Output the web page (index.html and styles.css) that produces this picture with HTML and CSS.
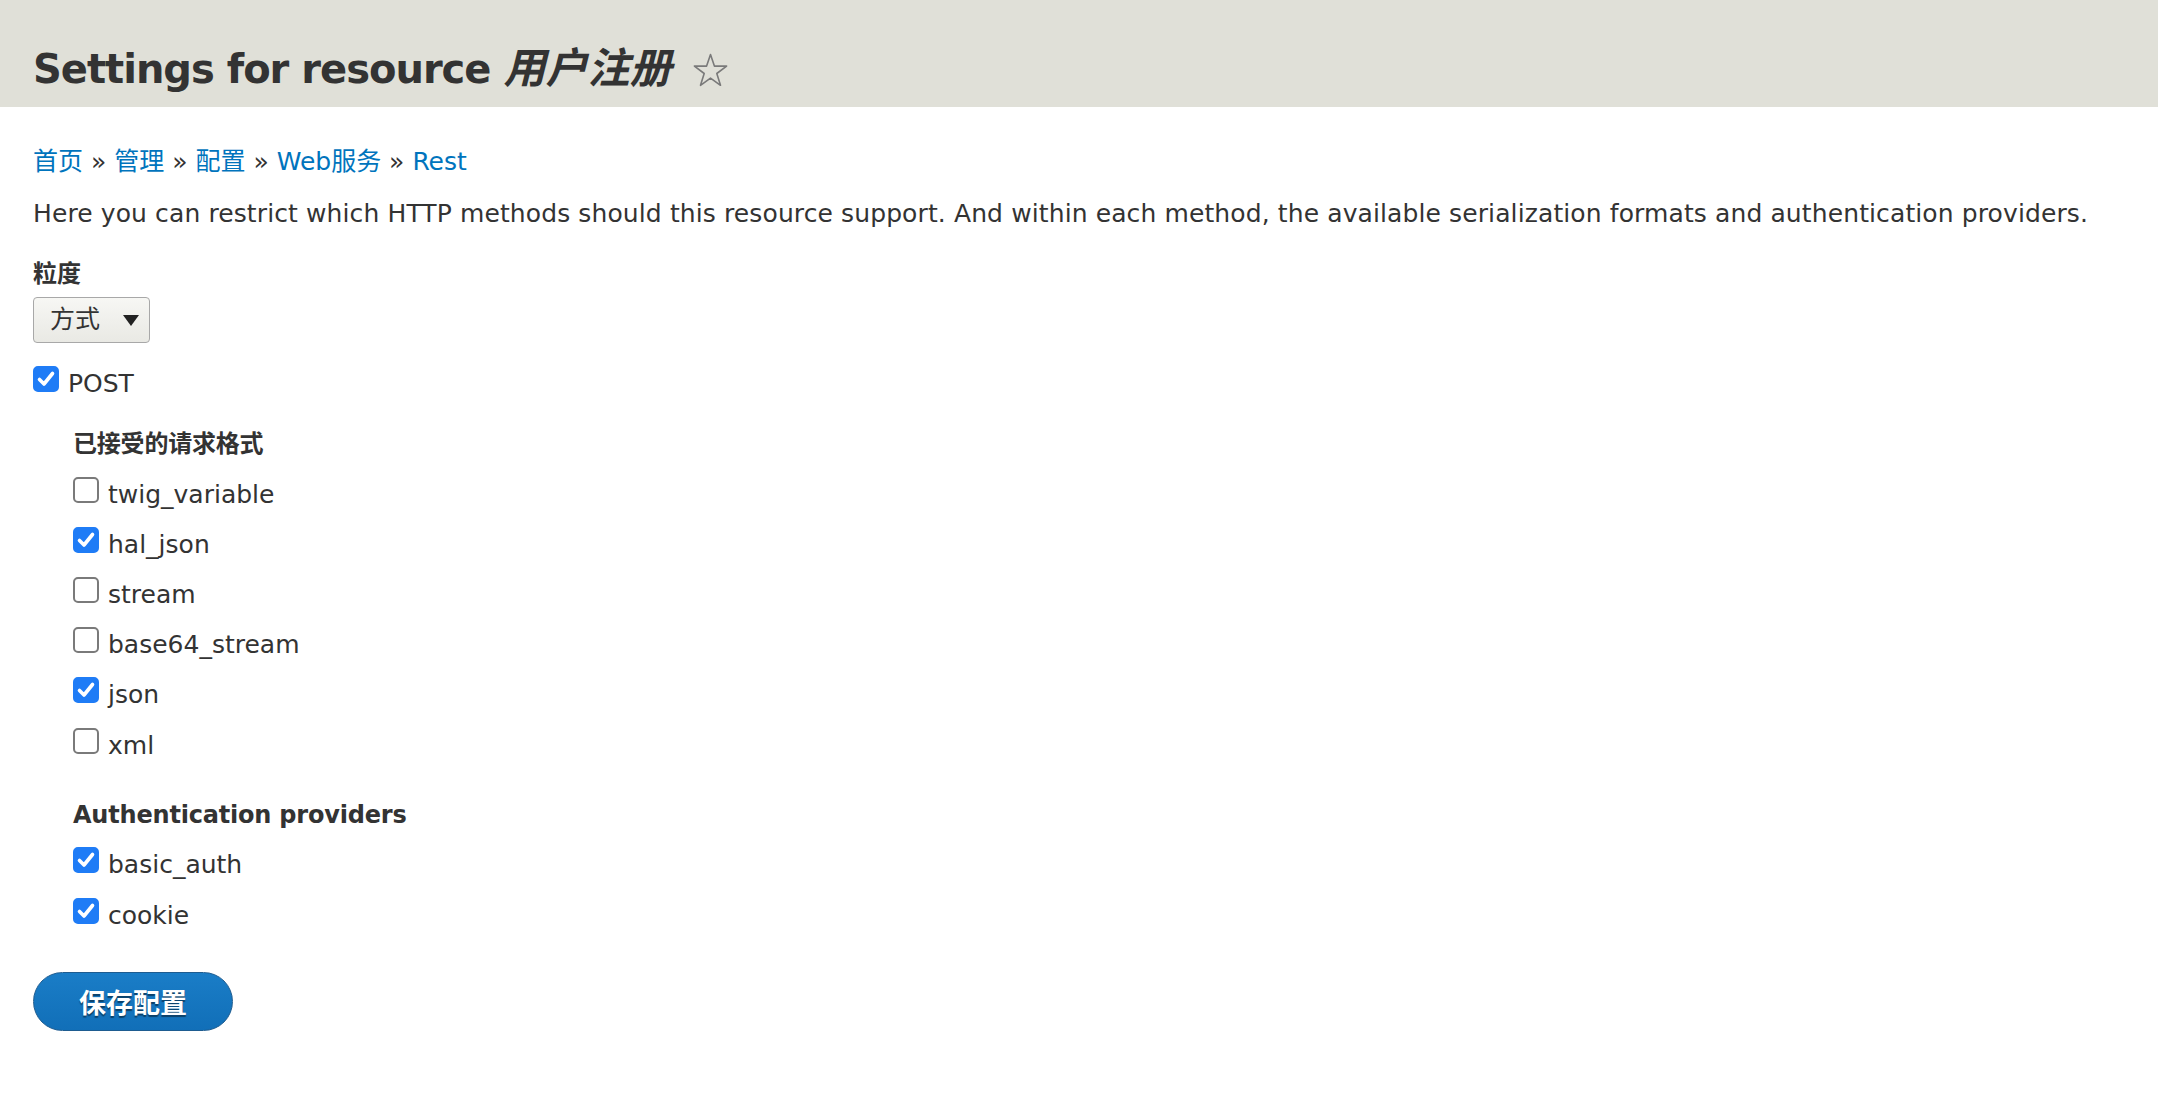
FILE: index.html
```html
<!DOCTYPE html>
<html lang="zh">
<head>
<meta charset="utf-8">
<title>Settings for resource 用户注册</title>
<link rel="stylesheet" href="styles.css">
</head>
<body>
<header class="page-header">
  <h1 class="page-title">Settings for resource <em class="title-name">用户注册</em><svg class="star" width="36" height="36" viewBox="0 0 36 36" aria-hidden="true"><polygon points="17.5,1.5 21.4,13.1 33.6,13.1 23.8,20.5 27.5,32.3 17.5,25.1 7.5,32.3 11.2,20.5 1.4,13.1 13.6,13.1" fill="none" stroke="#7a7a7a" stroke-width="1.6" stroke-linejoin="round"/></svg></h1>
</header>
<main class="content">
  <nav class="breadcrumb"><a href="#">首页</a> » <a href="#">管理</a> » <a href="#">配置</a> » <a href="#">Web服务</a> » <a href="#">Rest</a></nav>
  <p class="description">Here you can restrict which HTTP methods should this resource support. And within each method, the available serialization formats and authentication providers.</p>
  <div class="form-item">
    <label class="label">粒度</label>
    <div class="select"><span class="select-text">方式</span><svg class="select-arrow" width="16" height="11" viewBox="0 0 16 11" aria-hidden="true"><polygon points="0,0 16,0 8,11" fill="#222"/></svg></div>
  </div>
  <div class="check-row post"><span class="cb checked"><svg width="26" height="26" viewBox="0 0 26 26"><path d="M6.5 13.5 L11 18 L19.5 7.5" fill="none" stroke="#fff" stroke-width="3.6" stroke-linecap="round" stroke-linejoin="round"/></svg></span><span class="cb-label">POST</span></div>
  <div class="sub">
    <h3 class="sub-title">已接受的请求格式</h3>
    <div class="check-row first"><span class="cb"></span><span class="cb-label">twig_variable</span></div>
    <div class="check-row"><span class="cb checked"><svg width="26" height="26" viewBox="0 0 26 26"><path d="M6.5 13.5 L11 18 L19.5 7.5" fill="none" stroke="#fff" stroke-width="3.6" stroke-linecap="round" stroke-linejoin="round"/></svg></span><span class="cb-label">hal_json</span></div>
    <div class="check-row"><span class="cb"></span><span class="cb-label">stream</span></div>
    <div class="check-row"><span class="cb"></span><span class="cb-label">base64_stream</span></div>
    <div class="check-row"><span class="cb checked"><svg width="26" height="26" viewBox="0 0 26 26"><path d="M6.5 13.5 L11 18 L19.5 7.5" fill="none" stroke="#fff" stroke-width="3.6" stroke-linecap="round" stroke-linejoin="round"/></svg></span><span class="cb-label">json</span></div>
    <div class="check-row"><span class="cb"></span><span class="cb-label">xml</span></div>
    <h3 class="sub-title auth">Authentication providers</h3>
    <div class="check-row first-auth"><span class="cb checked"><svg width="26" height="26" viewBox="0 0 26 26"><path d="M6.5 13.5 L11 18 L19.5 7.5" fill="none" stroke="#fff" stroke-width="3.6" stroke-linecap="round" stroke-linejoin="round"/></svg></span><span class="cb-label">basic_auth</span></div>
    <div class="check-row"><span class="cb checked"><svg width="26" height="26" viewBox="0 0 26 26"><path d="M6.5 13.5 L11 18 L19.5 7.5" fill="none" stroke="#fff" stroke-width="3.6" stroke-linecap="round" stroke-linejoin="round"/></svg></span><span class="cb-label">cookie</span></div>
  </div>
  <button class="btn-primary" type="button">保存配置</button>
</main>
</body>
</html>
```
FILE: styles.css
```css
html, body {
  margin: 0;
  padding: 0;
  background: #fff;
}
body {
  font-family: "DejaVu Sans", "Noto Sans CJK SC", sans-serif;
  font-size: 25px;
  color: #333;
}
.page-header {
  background: #e0e0d8;
  height: 107px;
  box-sizing: border-box;
  padding: 45px 33px 0;
}
.page-title {
  margin: 0;
  font-size: 40px;
  line-height: 48px;
  font-weight: bold;
  letter-spacing: -1px;
  color: #333;
  white-space: nowrap;
  display: flex;
  align-items: baseline;
}
.title-name {
  font-style: italic;
  font-size: 42px;
  letter-spacing: 0;
  margin-left: 13px;
}
.star {
  margin-left: 22px;
  align-self: center;
  position: relative;
  top: 2px;
}
.content {
  padding: 0 33px;
}
.breadcrumb {
  margin-top: 40px;
  line-height: 30px;
}
.breadcrumb a {
  color: #0074bd;
  text-decoration: none;
}
.description {
  margin: 22px 0 0;
  line-height: 30px;
  letter-spacing: 0.11px;
  white-space: nowrap;
}
.form-item {
  margin-top: 30px;
}
.label {
  display: block;
  font-weight: bold;
  font-size: 24px;
  line-height: 30px;
}
.select {
  margin-top: 8px;
  width: 117px;
  height: 46px;
  box-sizing: border-box;
  border: 1px solid #a8a8a8;
  border-radius: 4px;
  background: linear-gradient(to bottom, #f7f7f4, #e9e9e4);
  display: flex;
  align-items: center;
  padding: 0 10px 0 16px;
  line-height: 44px;
}
.select-text {
  color: #333;
}
.select-arrow {
  margin-left: auto;
}
.check-row {
  line-height: 50.2px;
  height: 50.2px;
  white-space: nowrap;
}
.check-row.post {
  margin-top: 16px;
}
.cb {
  display: inline-block;
  width: 26px;
  height: 26px;
  box-sizing: border-box;
  border: 2px solid #7a7a7a;
  border-radius: 5px;
  background: #fff;
  vertical-align: baseline;
  position: relative;
}
.cb.checked {
  background: #1f7cf6;
  border-color: #1f7cf6;
}
.cb svg {
  position: absolute;
  left: -2px;
  top: -2px;
}
.cb-label {
  margin-left: 9px;
}
.sub {
  padding-left: 40px;
}
.sub-title {
  margin: 20px 0 0;
  font-size: 24px;
  font-weight: bold;
  letter-spacing: -0.2px;
  line-height: 30px;
}
.sub-title.auth {
  margin-top: 29px;
}
.check-row.first {
  margin-top: 10.5px;
}
.check-row.first-auth {
  margin-top: 10.5px;
}
.btn-primary {
  margin-top: 31px;
  height: 59px;
  padding: 0 45px;
  border: 1px solid #1e5c90;
  border-radius: 30px;
  background: linear-gradient(to bottom, #1a7dc7, #116fb8);
  color: #fff;
  font-family: "DejaVu Sans", "Noto Sans CJK SC", sans-serif;
  font-size: 27px;
  font-weight: bold;
  text-shadow: 0 2px 1px rgba(0, 0, 0, 0.45);
  cursor: pointer;
}
```
